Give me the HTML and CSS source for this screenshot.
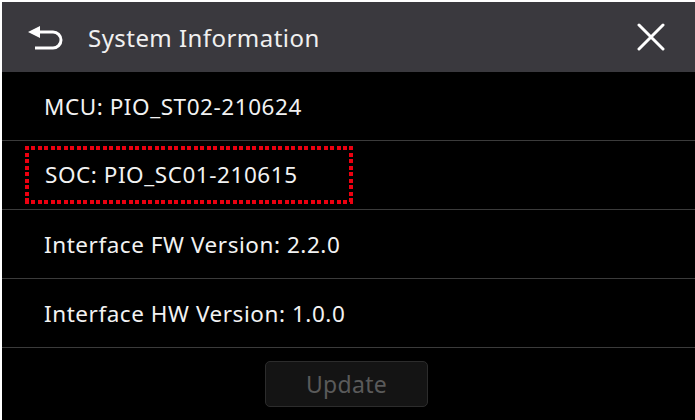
FILE: index.html
```html
<!DOCTYPE html>
<html lang="en">
<head>
  <meta charset="UTF-8" />
  <meta name="viewport" content="width=device-width, initial-scale=1.0" />
  <title>System Information</title>
  <link rel="stylesheet" href="styles.css">
</head>
<body>
  <div class="screen">
    <header class="topbar">
      <button class="icon-btn back" aria-label="Back">
        <svg width="36" height="26" viewBox="0 0 36 26">
          <polygon points="1,7 13,1 13,13" fill="#fff"/>
          <path d="M12 7 H26 A8 8 0 0 1 26 23 H8" fill="none" stroke="#fff" stroke-width="3"/>
        </svg>
      </button>
      <h1 class="title">System Information</h1>
      <button class="icon-btn close" aria-label="Close">
        <svg width="28" height="28" viewBox="0 0 28 28">
          <path d="M2 2 L26 26 M26 2 L2 26" stroke="#fff" stroke-width="3" stroke-linecap="round"/>
        </svg>
      </button>
    </header>

    <ul class="info-list">
      <li class="row">MCU: PIO_ST02-210624</li>
      <li class="row"><span class="marked">SOC: PIO_SC01-210615</span></li>
      <li class="row">Interface FW Version: 2.2.0</li>
      <li class="row">Interface HW Version: 1.0.0</li>
    </ul>

    <div class="actions">
      <button class="update" disabled>Update</button>
    </div>
  </div>
</body>
</html>
```

FILE: styles.css
```css
* {
  margin: 0;
  padding: 0;
  box-sizing: border-box;
}

html, body {
  height: 100%;
  background: #000;
  font-family: 'Noto Sans', 'Open Sans', sans-serif;
  color: #f2f2f2;
  overflow: hidden;
}

.screen {
  height: 100%;
  border-top: 2px solid #fff;
  border-left: 2px solid #fff;
  display: flex;
  flex-direction: column;
}

.topbar {
  height: 70px;
  background: #3a393e;
  display: flex;
  align-items: center;
  padding: 0 30px 0 25px;
}

.icon-btn {
  background: none;
  border: 0;
  display: flex;
  align-items: center;
  cursor: pointer;
}

.back {
  margin-top: 1px;
}

.title {
  flex: 1;
  margin-left: 25px;
  font-size: 24px;
  font-weight: 400;
  color: #f0f0f0;
  letter-spacing: 0.45px;
}

.info-list {
  list-style: none;
}

.row {
  height: 69px;
  border-bottom: 1px solid #3b3b3b;
  display: flex;
  align-items: center;
  padding-left: 42px;
  font-size: 22.5px;
  letter-spacing: 0.55px;
}

.row .marked {
  margin-left: -19px;
  width: 328px;
  height: 58px;
  margin-top: -1px;
  padding-left: 20px;
  display: flex;
  align-items: center;
  background:
    repeating-linear-gradient(90deg, #ec0010 0 4px, transparent 4px 6.5px) top left / 100% 4px no-repeat,
    repeating-linear-gradient(90deg, #ec0010 0 4px, transparent 4px 6.5px) bottom left / 100% 4px no-repeat,
    repeating-linear-gradient(180deg, #ec0010 0 4px, transparent 4px 6.5px) top left / 4px 100% no-repeat,
    repeating-linear-gradient(180deg, #ec0010 0 4px, transparent 4px 6.5px) top right / 4px 100% no-repeat;
}

.actions {
  display: flex;
  justify-content: center;
  padding-top: 13px;
  padding-right: 4px;
}

.update {
  width: 163px;
  height: 46px;
  background: #141414;
  border: 1px solid #2c2c2c;
  border-radius: 5px;
  color: #5a5a5a;
  font-family: inherit;
  font-size: 23px;
  letter-spacing: 0.3px;
}
```
